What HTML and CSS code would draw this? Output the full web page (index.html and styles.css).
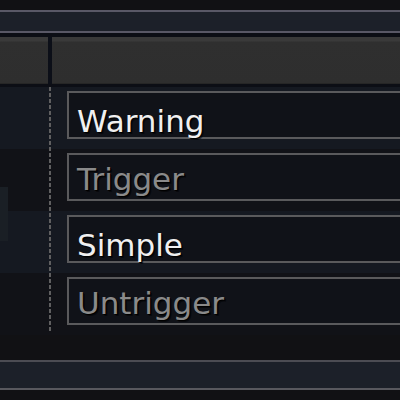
FILE: index.html
```html
<!DOCTYPE html>
<html>
<head>
<meta charset="utf-8">
<link rel="stylesheet" href="styles.css">
</head>
<body>
<div class="screen">
  <div class="topbar"></div>
  <div class="tabbar"></div>
  <div class="spacer"></div>
  <div class="header">
    <div class="hcell hcell-left"></div>
    <div class="hsep"></div>
    <div class="hcell hcell-right"></div>
  </div>
  <div class="table">
    <div class="scroll-thumb"></div>
    <div class="row row-a">
      <div class="lcell"></div>
      <div class="rcell"><div class="field field-on">Warning</div></div>
    </div>
    <div class="row row-b">
      <div class="lcell"></div>
      <div class="rcell"><div class="field field-off">Trigger</div></div>
    </div>
    <div class="row row-a">
      <div class="lcell"></div>
      <div class="rcell"><div class="field field-on">Simple</div></div>
    </div>
    <div class="row row-b">
      <div class="lcell"></div>
      <div class="rcell"><div class="field field-off">Untrigger</div></div>
    </div>
  </div>
  <div class="filler"></div>
  <div class="footer"></div>
  <div class="bottom"></div>
</div>
</body>
</html>
```

FILE: styles.css
```css
html, body {
  margin: 0;
  padding: 0;
  background: #111114;
  overflow: hidden;
}

.screen {
  width: 400px;
  height: 400px;
  display: flex;
  flex-direction: column;
  font-family: "DejaVu Sans", sans-serif;
}

.topbar {
  height: 10px;
  background: #111114;
}

.tabbar {
  height: 19px;
  background: #1c2029;
  border-top: 2px solid #595866;
  border-bottom: 2px solid #595866;
}

.spacer {
  height: 4px;
  background: #0c0e15;
}

.header {
  height: 47px;
  display: flex;
  background: #0c0f18;
}

.hcell {
  background: linear-gradient(#3a3a3a 0, #3a3a3a 4px, #2f2f2f 5px, #2e2e2e 100%);
  border-bottom: 1px solid #262626;
}

.hcell-left {
  width: 48px;
}

.hsep {
  width: 4px;
}

.hcell-right {
  flex: 1;
}

.table {
  position: relative;
  padding-top: 3px;
  background: #0c0e15;
}

.table::before {
  content: "";
  position: absolute;
  left: 49px;
  top: 3px;
  width: 2px;
  height: 246px;
  background: repeating-linear-gradient(to bottom, #5f5f60 0, #5f5f60 4px, transparent 4px, transparent 6px);
  z-index: 2;
}

.scroll-thumb {
  position: absolute;
  left: 0;
  top: 103px;
  width: 8px;
  height: 54px;
  background: #1a1f25;
  z-index: 1;
}

.row {
  height: 62px;
  display: flex;
}

.row-a {
  background: #151921;
}

.row-b {
  background: #111217;
}

.lcell {
  width: 51px;
}

.rcell {
  flex: 1;
  padding-left: 16px;
  padding-top: 4px;
}

.field {
  border: 2px solid #5a5a5c;
  border-right: none;
  background: #101218;
  font-size: 31px;
  line-height: 31px;
  padding-left: 8px;
  text-shadow: 1px 1px 0 #000, 2px 2px 0 rgba(0,0,0,0.5);
}

.field-on {
  color: #f0f0f0;
  height: 31px;
  padding-top: 13px;
}

.field-off {
  color: #8a8a8a;
  height: 35px;
  padding-top: 9px;
}

.filler {
  height: 25px;
  background: #111114;
}

.footer {
  height: 26px;
  background: #1c2029;
  border-top: 2px solid #4c4c53;
  border-bottom: 2px solid #58585e;
}

.bottom {
  flex: 1;
  background: #111114;
}
```
